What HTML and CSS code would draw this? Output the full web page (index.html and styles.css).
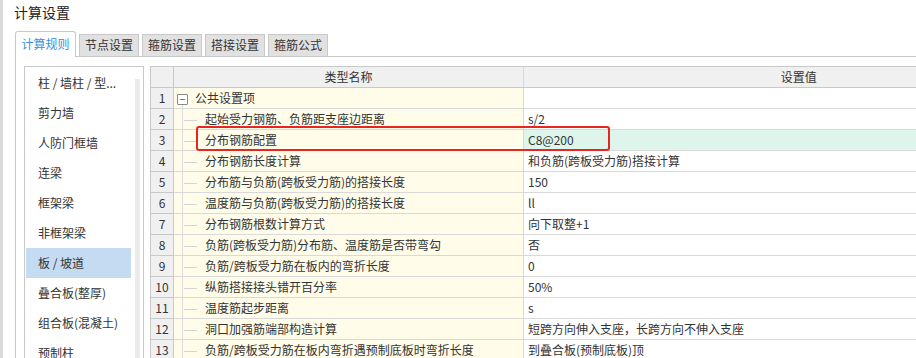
FILE: index.html
```html
<!DOCTYPE html>
<html>
<head>
<meta charset="utf-8">
<title>计算设置</title>
<link rel="stylesheet" href="styles.css">
</head>
<body>
<div class="window">
	<div class="title">计算设置</div>
	<div class="tabs">
		<div class="tab active">计算规则</div>
		<div class="tab">节点设置</div>
		<div class="tab">箍筋设置</div>
		<div class="tab">搭接设置</div>
		<div class="tab">箍筋公式</div>
	</div>
	<div class="panel">
		<div class="list">
			<div class="items">
				<div class="item">柱 / 墙柱 / 型...</div>
				<div class="item">剪力墙</div>
				<div class="item">人防门框墙</div>
				<div class="item">连梁</div>
				<div class="item">框架梁</div>
				<div class="item">非框架梁</div>
				<div class="item selected">板 / 坡道</div>
				<div class="item">叠合板(整厚)</div>
				<div class="item">组合板(混凝土)</div>
				<div class="item">预制柱</div>
			</div>
			<div class="scrollbar"></div>
		</div>
		<div class="grid">
			<table class="rules">
				<colgroup><col class="c-num"><col class="c-name"><col class="c-value"></colgroup>
				<tr class="head">
					<td class="num"></td>
					<td>类型名称</td>
					<td>设置值</td>
				</tr>
				<tr>
					<td class="num">1</td>
					<td class="name group"><span class="toggle">−</span>公共设置项</td>
					<td class="value"></td>
				</tr>
				<tr>
					<td class="num">2</td>
					<td class="name"><span class="twig"></span>起始受力钢筋、负筋距支座边距离</td>
					<td class="value">s/2</td>
				</tr>
				<tr>
					<td class="num">3</td>
					<td class="name"><span class="twig"></span>分布钢筋配置</td>
					<td class="value current">C8@200</td>
				</tr>
				<tr>
					<td class="num">4</td>
					<td class="name"><span class="twig"></span>分布钢筋长度计算</td>
					<td class="value">和负筋(跨板受力筋)搭接计算</td>
				</tr>
				<tr>
					<td class="num">5</td>
					<td class="name"><span class="twig"></span>分布筋与负筋(跨板受力筋)的搭接长度</td>
					<td class="value">150</td>
				</tr>
				<tr>
					<td class="num">6</td>
					<td class="name"><span class="twig"></span>温度筋与负筋(跨板受力筋)的搭接长度</td>
					<td class="value">ll</td>
				</tr>
				<tr>
					<td class="num">7</td>
					<td class="name"><span class="twig"></span>分布钢筋根数计算方式</td>
					<td class="value">向下取整+1</td>
				</tr>
				<tr>
					<td class="num">8</td>
					<td class="name"><span class="twig"></span>负筋(跨板受力筋)分布筋、温度筋是否带弯勾</td>
					<td class="value">否</td>
				</tr>
				<tr>
					<td class="num">9</td>
					<td class="name"><span class="twig"></span>负筋/跨板受力筋在板内的弯折长度</td>
					<td class="value">0</td>
				</tr>
				<tr>
					<td class="num">10</td>
					<td class="name"><span class="twig"></span>纵筋搭接接头错开百分率</td>
					<td class="value">50%</td>
				</tr>
				<tr>
					<td class="num">11</td>
					<td class="name"><span class="twig"></span>温度筋起步距离</td>
					<td class="value">s</td>
				</tr>
				<tr>
					<td class="num">12</td>
					<td class="name"><span class="twig"></span>洞口加强筋端部构造计算</td>
					<td class="value">短跨方向伸入支座，长跨方向不伸入支座</td>
				</tr>
				<tr>
					<td class="num">13</td>
					<td class="name"><span class="twig"></span>负筋/跨板受力筋在板内弯折遇预制底板时弯折长度</td>
					<td class="value">到叠合板(预制底板)顶</td>
				</tr>
			</table>
			<div class="mark"></div>
		</div>
	</div>
</div>
</body>
</html>
```

FILE: styles.css
```css
	html, body {
		margin: 0;
		padding: 0;
		background: #FFFFFF;
	}

	body {
		width: 916px;
		height: 358px;
		overflow: hidden;
		font-family: "Noto Sans CJK SC", "Microsoft YaHei", sans-serif;
		font-size: 12px;
		color: #333333;
	}

	.window {
		height: 358px;
		border-left: 3px solid #d9d9d9;
		display: flex;
		flex-direction: column;
	}

	.title {
		height: 24px;
		line-height: 24px;
		padding-left: 11px;
		font-size: 14px;
		color: #222222;
	}

	/* tab strip */
	.tabs {
		display: flex;
		align-items: flex-end;
		height: 25px;
		margin-top: 7px;
		margin-left: 12px;
	}

	.tab {
		box-sizing: border-box;
		width: 60px;
		height: 22px;
		line-height: 20px;
		margin-left: 3px;
		text-align: center;
		background: #e1e1e1;
		border: 1px solid #c9c9c9;
		border-bottom: none;
		color: #333333;
	}

	.tab.active {
		width: 61px;
		height: 26px;
		line-height: 24px;
		margin-left: 0;
		margin-bottom: -1px;
		background: #FFFFFF;
		border-radius: 3px 3px 0 0;
		color: #3b8ede;
		position: relative;
		z-index: 1;
	}

	/* tab body */
	.panel {
		flex: 1;
		display: flex;
		gap: 6px;
		margin-left: 12px;
		padding: 9px 0 0 8px;
		border-top: 1px solid #c9c9c9;
		border-left: 1px solid #c9c9c9;
		min-height: 0;
	}

	.list {
		box-sizing: border-box;
		flex: 0 0 120px;
		display: flex;
		border: 1px solid #c9c9c9;
		border-bottom: none;
	}

	.items {
		width: 105px;
		margin-left: 1px;
		padding-top: 1px;
	}

	.item {
		height: 30px;
		line-height: 30px;
		padding-left: 12px;
		white-space: nowrap;
		color: #333333;
	}

	.item.selected {
		background: #c5dbf1;
	}

	.scrollbar {
		width: 5px;
		margin: 12px 0 0 4px;
		background: #ebebeb;
	}

	/* settings grid */
	.grid {
		position: relative;
		flex: 0 0 auto;
	}

	.rules {
		table-layout: fixed;
		width: 923px;
		border-collapse: collapse;
	}

	.c-num { width: 23px; }
	.c-name { width: 350px; }
	.c-value { width: 550px; }

	.rules td {
		height: 20px;
		padding: 0;
		border: 1px solid #d9d9d9;
		border-width: 0 0 1px 1px;
		white-space: nowrap;
		overflow: hidden;
		line-height: 20px;
	}

	.rules tr.head td {
		height: 19px;
		background: #f0f0f0;
		text-align: center;
		border-top: 1px solid #c9c9c9;
		border-bottom-color: #c9c9c9;
	}

	.rules td.num {
		text-align: center;
		background: #f0f0f0;
		border-left-color: #c9c9c9;
		border-bottom-color: #c9c9c9;
		border-right: 1px solid #c9c9c9;
	}

	.rules td.name {
		padding-left: 10px;
		background: linear-gradient(#dcdcdc, #dcdcdc) 8px 0 / 1px 100% no-repeat, #fffce9;
	}

	.rules td.name.group {
		padding-left: 3px;
		background: linear-gradient(#dcdcdc, #dcdcdc) 8px 16px / 1px 100% no-repeat, #fffce9;
	}

	.rules td.value {
		padding-left: 4px;
		background: #FFFFFF;
	}

	.rules td.value.current {
		background: #ddf5ea;
	}

	.twig {
		display: inline-block;
		width: 13px;
		height: 1px;
		margin-right: 8px;
		vertical-align: middle;
		background: #d4d4d4;
	}

	.toggle {
		box-sizing: border-box;
		display: inline-block;
		width: 11px;
		height: 11px;
		margin-right: 7px;
		border: 1px solid #8a8a8a;
		border-radius: 1px;
		line-height: 8px;
		font-size: 10px;
		text-align: center;
		vertical-align: middle;
		color: #444444;
		background: #FFFFFF;
	}

	/* red highlight drawn over row 3 */
	.mark {
		position: absolute;
		left: 46px;
		top: 60px;
		width: 414px;
		height: 25px;
		box-sizing: border-box;
		border: 2px solid #e8261f;
		border-radius: 3px;
	}
```
